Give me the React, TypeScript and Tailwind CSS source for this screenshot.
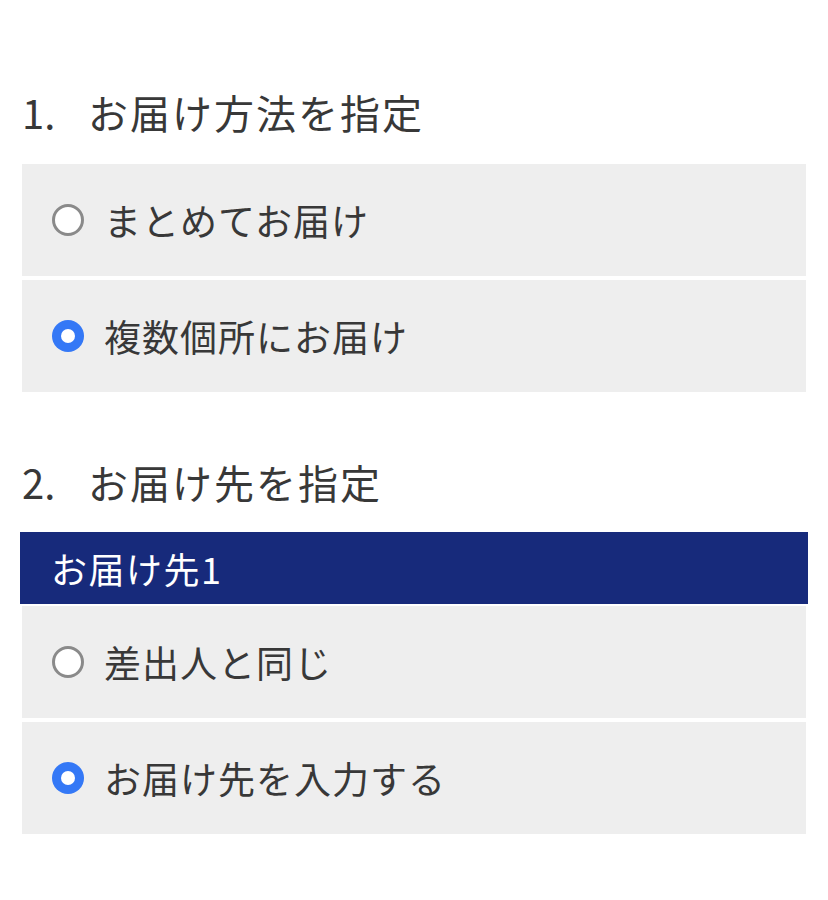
import React from "react";

const font = { fontFamily: '"Noto Sans CJK JP", "Noto Sans", sans-serif' };

function Radio({ checked }: { checked: boolean }) {
  return checked ? (
    <span className="flex h-[32px] w-[32px] shrink-0 items-center justify-center rounded-full bg-[#3478f6]">
      <span className="h-[14px] w-[14px] rounded-full bg-white" />
    </span>
  ) : (
    <span className="h-[32px] w-[32px] shrink-0 rounded-full border-[3px] border-[#8a8a8a] bg-white" />
  );
}

function Option({ label, checked }: { label: string; checked: boolean }) {
  return (
    <div className="flex h-[112px] items-center gap-[20px] bg-[#eeeeee] pl-[30px]">
      <Radio checked={checked} />
      <span className="text-[37px] leading-none tracking-[1px] text-[#383838]">{label}</span>
    </div>
  );
}

function Heading({ num, text }: { num: string; text: string }) {
  return (
    <div className="flex items-center text-[40px] leading-[56px] text-[#383838]">
      <span className="w-[66px] shrink-0">{num}</span>
      <span className="tracking-[2px]">{text}</span>
    </div>
  );
}

export default function App() {
  return (
    <div className="min-h-[900px] bg-white px-[22px] pt-[84px]" style={font}>
      <Heading num="1." text="お届け方法を指定" />
      <div className="mt-[24px] flex flex-col gap-[4px]">
        <Option label="まとめてお届け" checked={false} />
        <Option label="複数個所にお届け" checked={true} />
      </div>
      <div className="mt-[62px]">
        <Heading num="2." text="お届け先を指定" />
      </div>
      <div className="mx-[-2px] mt-[22px] flex h-[72px] items-center bg-[#172a7b] pl-[31px]">
        <span className="text-[36px] leading-none tracking-[1.5px] text-white">お届け先1</span>
      </div>
      <div className="mt-[2px] flex flex-col gap-[4px]">
        <Option label="差出人と同じ" checked={false} />
        <Option label="お届け先を入力する" checked={true} />
      </div>
    </div>
  );
}
